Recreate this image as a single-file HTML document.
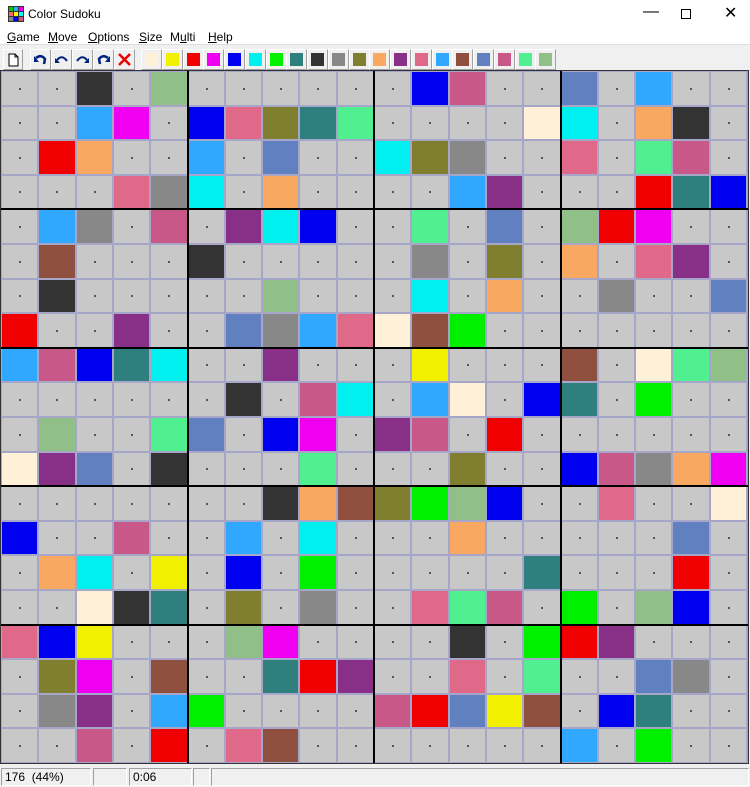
<!DOCTYPE html>
<html><head><meta charset="utf-8"><style>
*{margin:0;padding:0;box-sizing:border-box}
body{width:750px;height:787px;background:#f0f0f0;position:relative;overflow:hidden;font-family:"Liberation Sans",sans-serif;font-size:12px;color:#000}
.title{position:absolute;left:0;top:0;width:750px;height:30px;background:#fff}
.title span{position:absolute;left:28px;top:7px;font-size:12px}
.menu{position:absolute;left:0;top:30px;width:750px;height:15px;background:#fff;border-bottom:1px solid #ddd}
.menu span{position:absolute;top:0px;font-size:12px}
.btn{position:absolute;top:49px;height:21px;background:#f0f0f0;border:1px solid;border-color:#fff #a0a0a0 #a0a0a0 #fff}
.sw{position:absolute;left:3px;top:3px;width:13px;height:13px}
#grid{position:absolute;left:0;top:70px;width:749px;height:694px;background:#a6a6c8;border:1px solid #333}
.c{position:absolute;background:#c8c8c8}
.c.e::after{content:"";position:absolute;left:50%;top:50%;width:2px;height:2px;background:#555;margin:-1px}
.bl{position:absolute;background:#000}
.sb{position:absolute;top:768px;height:18px;border:1px solid;border-color:#a0a0a0 #fff #fff #a0a0a0;padding:1px 3px;font-size:12px}
</style></head><body>
<div class="title">
<svg style="position:absolute;left:8px;top:6px" width="16" height="16"><rect width="16" height="16" fill="#333"/><rect x="1" y="1" width="4" height="4" fill="#0c0"/><rect x="6" y="1" width="4" height="4" fill="#3af"/><rect x="11" y="1" width="4" height="4" fill="#e0e"/><rect x="1" y="6" width="4" height="4" fill="#f66"/><rect x="6" y="6" width="4" height="4" fill="#ff0"/><rect x="11" y="6" width="4" height="4" fill="#0ff"/><rect x="1" y="11" width="4" height="4" fill="#888"/><rect x="6" y="11" width="4" height="4" fill="#00f"/><rect x="11" y="11" width="4" height="4" fill="#c58"/></svg>
<span>Color Sudoku</span>
<span style="left:643px;top:3px;font-size:16px">&#8212;</span>
<div style="position:absolute;left:681px;top:9px;width:10px;height:10px;border:1px solid #000"></div>
<span style="left:724px;top:3px;font-size:16px">&#10005;</span>
</div>
<div class="menu">
<span style="left:7px"><u>G</u>ame</span><span style="left:48px"><u>M</u>ove</span><span style="left:88px"><u>O</u>ptions</span><span style="left:139px"><u>S</u>ize</span><span style="left:170px">M<u>u</u>lti</span><span style="left:208px"><u>H</u>elp</span>
</div>
<div class="btn" style="left:3px;width:20px"><svg width="18" height="19"><path d="M5 4h6l3 3v9H5z" fill="#fff" stroke="#000"/><path d="M11 4v3h3" fill="none" stroke="#000"/></svg></div>
<div class="btn" style="left:30px;width:21px"><svg width="19" height="19"><path d="M5 8 Q10 4 14 9 L13 14" fill="none" stroke="#002080" stroke-width="2.5"/><path d="M3 6 L8 12 L3 12z" fill="#002080"/></svg></div>
<div class="btn" style="left:51px;width:21px"><svg width="19" height="19"><path d="M5 10 Q10 4 15 11" fill="none" stroke="#002080" stroke-width="2"/><path d="M3 8 L8 13 L3 13z" fill="#002080"/></svg></div>
<div class="btn" style="left:72px;width:21px"><svg width="19" height="19"><path d="M14 10 Q9 4 4 11" fill="none" stroke="#002080" stroke-width="2"/><path d="M16 8 L11 13 L16 13z" fill="#002080"/></svg></div>
<div class="btn" style="left:93px;width:21px"><svg width="19" height="19"><path d="M14 8 Q9 4 5 9 L6 14" fill="none" stroke="#002080" stroke-width="2.5"/><path d="M16 6 L11 12 L16 12z" fill="#002080"/></svg></div>
<div class="btn" style="left:114px;width:21px"><svg width="19" height="19"><path d="M4 4L15 15M15 4L4 15" stroke="#e00" stroke-width="2.5"/></svg></div>
<div id="tb"></div>
<div id="grid"></div>
<div class="sb" style="left:1px;width:90px">176 &nbsp;(44%)</div>
<div class="sb" style="left:93px;width:34px"></div>
<div class="sb" style="left:129px;width:63px">0:06</div>
<div class="sb" style="left:193px;width:17px"></div>
<div class="sb" style="left:211px;width:538px"></div>
<script>
var P={W:"#fff0d8",Y:"#f0f000",R:"#f00000",M:"#f000f0",B:"#0000f0",C:"#00f0f0",G:"#00f000",T:"#2f7f7f",K:"#333333",A:"#888888",O:"#7f7f2f",N:"#f8a860",P:"#883088",I:"#e06888",L:"#30a8ff",U:"#905040",S:"#6080c0",Q:"#c85888",E:"#50f090",V:"#90c088"};
var order="WYRMBCGTKAONPILUSQEV";
var tb=document.getElementById("tb"),h="";
for(var i=0;i<20;i++){h+='<div class="btn" style="left:'+(141+i*20.75).toFixed(1)+'px;width:21px"><div class="sw" style="background:'+P[order[i]]+'"></div></div>';}
tb.innerHTML=h;
var rows=[
{2:"K",4:"V",11:"B",12:"Q",15:"S",17:"L"},
{2:"L",3:"M",5:"B",6:"I",7:"O",8:"T",9:"E",14:"W",15:"C",17:"N",18:"K"},
{1:"R",2:"N",5:"L",7:"S",10:"C",11:"O",12:"A",15:"I",17:"E",18:"Q"},
{3:"I",4:"A",5:"C",7:"N",12:"L",13:"P",17:"R",18:"T",19:"B"},
{1:"L",2:"A",4:"Q",6:"P",7:"C",8:"B",11:"E",13:"S",15:"V",16:"R",17:"M"},
{1:"U",5:"K",11:"A",13:"O",15:"N",17:"I",18:"P"},
{1:"K",7:"V",11:"C",13:"N",16:"A",19:"S"},
{0:"R",3:"P",6:"S",7:"A",8:"L",9:"I",10:"W",11:"U",12:"G"},
{0:"L",1:"Q",2:"B",3:"T",4:"C",7:"P",11:"Y",15:"U",17:"W",18:"E",19:"V"},
{6:"K",8:"Q",9:"C",11:"L",12:"W",14:"B",15:"T",17:"G"},
{1:"V",4:"E",5:"S",7:"B",8:"M",10:"P",11:"Q",13:"R"},
{0:"W",1:"P",2:"S",4:"K",8:"E",12:"O",15:"B",16:"Q",17:"A",18:"N",19:"M"},
{7:"K",8:"N",9:"U",10:"O",11:"G",12:"V",13:"B",16:"I",19:"W"},
{0:"B",3:"Q",6:"L",8:"C",12:"N",18:"S"},
{1:"N",2:"C",4:"Y",6:"B",8:"G",14:"T",18:"R"},
{2:"W",3:"K",4:"T",6:"O",8:"A",11:"I",12:"E",13:"Q",15:"G",17:"V",18:"B"},
{0:"I",1:"B",2:"Y",6:"V",7:"M",12:"K",14:"G",15:"R",16:"P"},
{1:"O",2:"M",4:"U",7:"T",8:"R",9:"P",12:"I",14:"E",17:"S",18:"A"},
{1:"A",2:"P",4:"L",5:"G",10:"Q",11:"R",12:"S",13:"Y",14:"U",16:"B",17:"T"},
{2:"Q",4:"R",6:"I",7:"U",15:"L",17:"G"}];
var g=document.getElementById("grid"),s="";
function X(i){return Math.round(i*37.3);}
function Y(j){return Math.round(j*34.6);}
for(var j=0;j<20;j++)for(var i=0;i<20;i++){
var x0=X(i)+1,x1=X(i+1)-1,y0=Y(j)+1,y1=Y(j+1)-1;
var c=rows[j][i];
s+='<div class="c'+(c?'':' e')+'" style="left:'+x0+'px;top:'+y0+'px;width:'+(x1-x0)+'px;height:'+(y1-y0)+'px'+(c?';background:'+P[c]:'')+'"></div>';}
for(var k=1;k<4;k++)s+='<div class="bl" style="left:'+(X(5*k)-1)+'px;top:0;width:2px;height:692px"></div>';
for(var k=1;k<5;k++)s+='<div class="bl" style="top:'+(Y(4*k)-1)+'px;left:0;height:2px;width:747px"></div>';
g.innerHTML=s;
</script>
</body></html>
